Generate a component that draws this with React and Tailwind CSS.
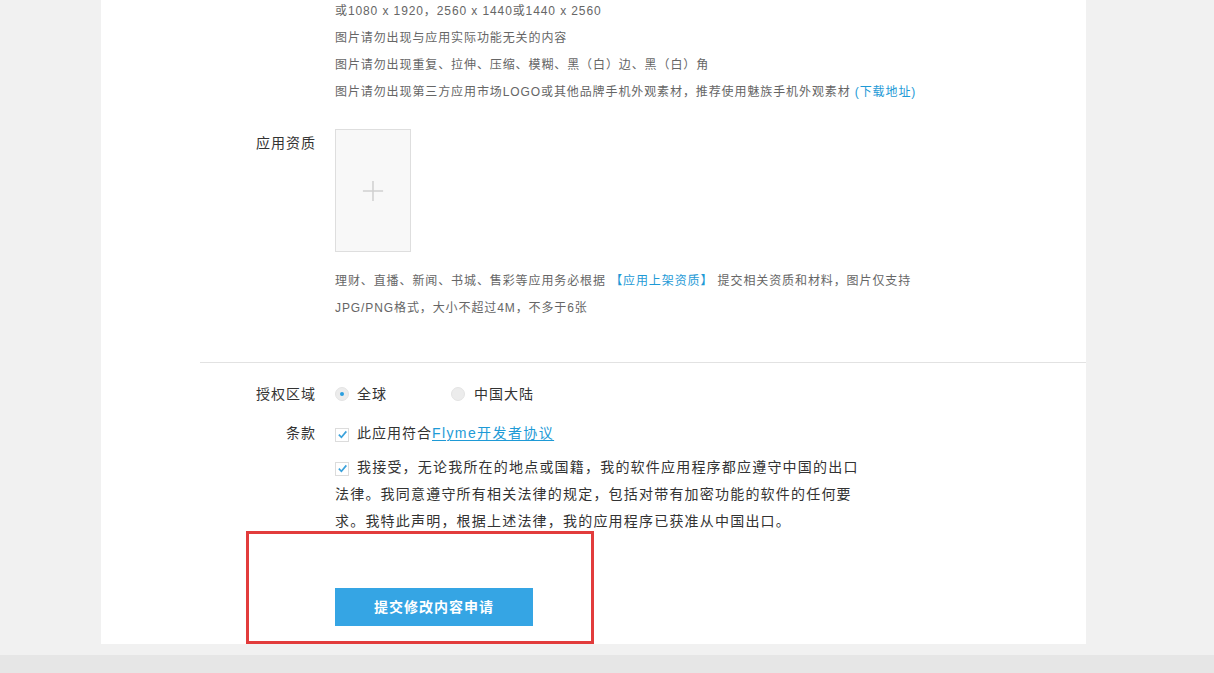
import React from 'react';

const font = { fontFamily: '"Liberation Sans", "Noto Sans CJK SC", sans-serif' };

const Hint = ({ children }) => (
  <p className="text-[12px] leading-[27px] tracking-[0.9px] text-[#666] whitespace-nowrap">{children}</p>
);

const Radio = ({ checked }) => (
  <span className="w-[14px] h-[14px] rounded-full bg-[#ececec] border border-[#e4e4e4] flex items-center justify-center shrink-0">
    {checked && <span className="w-[4px] h-[4px] rounded-full bg-[#2a9fe0]" />}
  </span>
);

const Check = () => (
  <span className="inline-flex w-[14px] h-[14px] border border-[#dcdcdc] bg-white items-center justify-center align-[-2px] mr-[8px]">
    <svg viewBox="0 0 12 12" className="w-[11px] h-[11px]">
      <path d="M2 6.2 L4.8 9 L10.2 2.6" fill="none" stroke="#3aa1db" strokeWidth="1.8" />
    </svg>
  </span>
);

export default function App() {
  return (
    <div className="h-[673px] overflow-hidden bg-[#f1f1f1] flex flex-col" style={font}>
      <div className="flex">
        <div className="w-[101px] shrink-0" />
        <div className="relative w-[985px] h-[644px] bg-white overflow-hidden">
          {/* continued screenshot hints */}
          <div className="pl-[234px] -mt-[2px]">
            <Hint>或1080 x 1920，2560 x 1440或1440 x 2560</Hint>
            <Hint>图片请勿出现与应用实际功能无关的内容</Hint>
            <Hint>图片请勿出现重复、拉伸、压缩、模糊、黑（白）边、黑（白）角</Hint>
            <Hint>
              图片请勿出现第三方应用市场LOGO或其他品牌手机外观素材，推荐使用魅族手机外观素材{' '}
              <a className="text-[#1e9ad6]">(下载地址)</a>
            </Hint>
          </div>

          {/* 应用资质 */}
          <div className="flex mt-[23px]">
            <div className="w-[215px] text-right text-[14px] leading-[28px] tracking-[1px] text-[#333]">应用资质</div>
            <div className="pl-[19px]">
              <div className="w-[76px] h-[123px] bg-[#f8f8f8] border border-[#dedede] flex items-center justify-center">
                <svg viewBox="0 0 24 24" className="w-[22px] h-[22px]">
                  <path d="M12 1 V23 M1 12 H23" stroke="#cfcfcf" strokeWidth="1.6" />
                </svg>
              </div>
              <div className="mt-[16px]">
                <Hint>
                  理财、直播、新闻、书城、售彩等应用务必根据{' '}
                  <a className="text-[#1e9ad6]">【应用上架资质】</a> 提交相关资质和材料，图片仅支持
                </Hint>
                <Hint>JPG/PNG格式，大小不超过4M，不多于6张</Hint>
              </div>
            </div>
          </div>

          <div className="ml-[99px] mt-[40px] border-t border-[#e2e2e2]" />

          {/* 授权区域 */}
          <div className="flex items-center mt-[17px] text-[14px] leading-[28px] tracking-[1px] text-[#333]">
            <div className="w-[215px] text-right">授权区域</div>
            <div className="pl-[19px] flex items-center">
              <label className="flex items-center gap-[8px] w-[116px]">
                <Radio checked />
                <span>全球</span>
              </label>
              <label className="flex items-center gap-[9px]">
                <Radio />
                <span>中国大陆</span>
              </label>
            </div>
          </div>

          {/* 条款 */}
          <div className="flex mt-[12px] text-[14px] leading-[27px] tracking-[1px] text-[#333]">
            <div className="w-[215px] text-right">条款</div>
            <div className="pl-[19px]">
              <p>
                <Check />
                此应用符合<a className="text-[#1e9ad6] underline underline-offset-2 tracking-[1.4px]">Flyme开发者协议</a>
              </p>
              <p className="mt-[7px] whitespace-nowrap tracking-[1.2px]">
                <Check />
                我接受，无论我所在的地点或国籍，我的软件应用程序都应遵守中国的出口
                <br />
                法律。我同意遵守所有相关法律的规定，包括对带有加密功能的软件的任何要
                <br />
                求。我特此声明，根据上述法律，我的应用程序已获准从中国出口。
              </p>
              <button className="mt-[53px] w-[198px] h-[38px] bg-[#35a5e4] text-white text-[14px] font-bold tracking-[1px]">
                提交修改内容申请
              </button>
            </div>
          </div>

          {/* annotation overlay */}
          <div className="absolute left-[145px] top-[531px] w-[348px] h-[113px] border-[3px] border-[#e23c3c]" />
        </div>
        <div className="flex-1" />
      </div>
      <div className="h-[11px] bg-[#f1f1f1]" />
      <div className="flex-1 bg-[#e6e6e6]" />
    </div>
  );
}
